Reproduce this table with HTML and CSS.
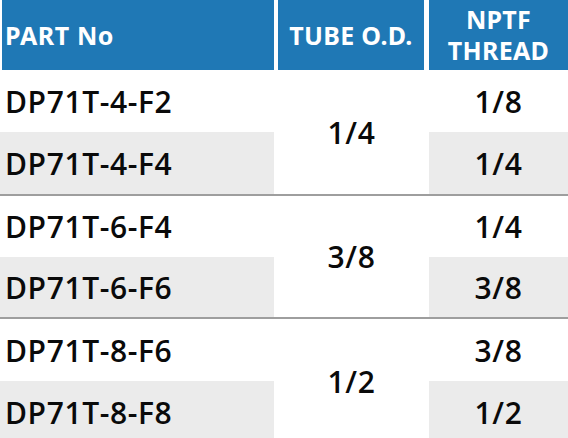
FILE: index.html
```html
<!DOCTYPE html>
<html>
<head>
<meta charset="utf-8">
<link rel="stylesheet" href="styles.css">
</head>
<body>
<div class="table">
  <div class="hd hd-part">PART No</div>
  <div class="hd hd-tube">TUBE O.D.</div>
  <div class="hd hd-thread">NPTF<br>THREAD</div>

  <div class="cell part r1">DP71T-4-F2</div>
  <div class="cell tube g1">1/4</div>
  <div class="cell thread r1">1/8</div>
  <div class="cell part r2 alt">DP71T-4-F4</div>
  <div class="cell thread r2 alt">1/4</div>
  <div class="line l1"></div>

  <div class="cell part r3">DP71T-6-F4</div>
  <div class="cell tube g2">3/8</div>
  <div class="cell thread r3">1/4</div>
  <div class="cell part r4 alt">DP71T-6-F6</div>
  <div class="cell thread r4 alt">3/8</div>
  <div class="line l2"></div>

  <div class="cell part r5">DP71T-8-F6</div>
  <div class="cell tube g3">1/2</div>
  <div class="cell thread r5">3/8</div>
  <div class="cell part r6 alt">DP71T-8-F8</div>
  <div class="cell thread r6 alt">1/2</div>
</div>
</body>
</html>
```

FILE: styles.css
```css
html, body {
  margin: 0;
  padding: 0;
  background: #fff;
  overflow: hidden;
}
.table {
  width: 568px;
  display: grid;
  grid-template-columns: 274px 155px 139px;
  grid-template-rows: 70px 62px 62px 2px 61px 60px 2px 62px 62px;
  font-family: "Noto Sans", sans-serif;
  color: #111;
}
.hd {
  background: #1f78b5;
  color: #fff;
  font-weight: 700;
  font-size: 25px;
  display: flex;
  align-items: center;
  line-height: 31px;
}
.hd-part {
  margin-left: 2px;
  padding-left: 3px;
  letter-spacing: 0.6px;
}
.hd-tube {
  margin: 0 5px 0 4px;
  justify-content: center;
  letter-spacing: 0.3px;
}
.hd-thread {
  justify-content: center;
  text-align: center;
  letter-spacing: 0.3px;
}
.cell {
  display: flex;
  align-items: center;
  font-family: "Open Sans", "Noto Sans", sans-serif;
  font-size: 30px;
  font-weight: 600;
  letter-spacing: 0.6px;
  color: #0a0a0a;
}
.part { padding-left: 5px; grid-column: 1; }
.tube { grid-column: 2; justify-content: center; }
.thread { grid-column: 3; justify-content: center; }
.alt { background: #ebebeb; }
.r1 { grid-row: 2; }
.r2 { grid-row: 3; }
.g1 { grid-row: 2 / 4; }
.l1 { grid-row: 4; }
.r3 { grid-row: 5; }
.r4 { grid-row: 6; }
.g2 { grid-row: 5 / 7; }
.l2 { grid-row: 7; }
.r5 { grid-row: 8; }
.r6 { grid-row: 9; }
.g3 { grid-row: 8 / 10; }
.line {
  grid-column: 1 / 4;
  background: #9e9e9e;
}
```
